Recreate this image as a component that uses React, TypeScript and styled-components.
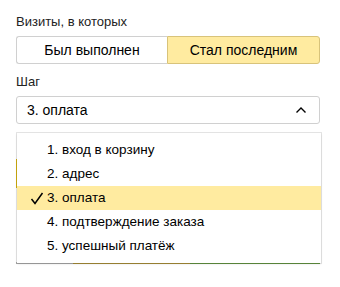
import React, { useState } from "react";
import styled, { createGlobalStyle } from "styled-components";

const GlobalStyle = createGlobalStyle`
  body {
    margin: 0;
    background: #fff;
    font-family: "Liberation Sans", Arial, sans-serif;
    color: #000;
  }
`;

const Wrapper = styled.div`
  width: 340px;
  height: 287px;
  padding: 13px 20px 0 16px;
  box-sizing: border-box;
  display: flex;
  flex-direction: column;
`;

const Label = styled.p`
  margin: 0 0 6px;
  font-size: 13px;
  line-height: 17px;
  color: #222;
`;

const Segmented = styled.div`
  display: grid;
  grid-template-columns: 151px 1fr;
  height: 28px;
  margin-bottom: 9px;
`;

const Segment = styled.button<{ $active: boolean }>`
  font: inherit;
  font-size: 14px;
  color: #000;
  cursor: pointer;
  background: ${(p) => (p.$active ? "#ffeba0" : "#fff")};
  border: 1px solid ${(p) => (p.$active ? "#d8c37a" : "#d0d0d0")};
  border-radius: ${(p) => (p.$active ? "0 3px 3px 0" : "3px 0 0 3px")};
  ${(p) => (p.$active ? "" : "border-right: none;")}
  padding: 0;
`;

const SelectArea = styled.div`
  position: relative;
`;

const SelectBox = styled.div`
  display: flex;
  align-items: center;
  justify-content: space-between;
  height: 28px;
  padding: 0 12px 0 10px;
  border: 1px solid #d0d0d0;
  border-radius: 3px;
  box-sizing: border-box;
  font-size: 14px;
`;

const Behind = styled.div`
  margin-top: 11px;
  height: 129px;
  display: flex;
  flex-direction: column;
  justify-content: flex-end;
  position: relative;
`;

const Accent = styled.div`
  position: absolute;
  left: 0;
  top: 24px;
  width: 2px;
  height: 29px;
  background: #e2bd10;
`;

const Stripe = styled.div`
  display: grid;
  grid-template-columns: 57px 117px 1fr;
  height: 2px;
`;

const StripePart = styled.div<{ $color: string }>`
  background: ${(p) => p.$color};
`;

const Menu = styled.ul`
  position: absolute;
  top: 37px;
  left: 1px;
  right: -1px;
  margin: 0;
  padding: 5px 0 5px;
  list-style: none;
  background: #fff;
  box-shadow: 0 0 0 1px rgba(0, 0, 0, 0.1), 0 1px 2px rgba(0, 0, 0, 0.12);
`;

const Item = styled.li<{ $selected: boolean }>`
  position: relative;
  height: 24px;
  line-height: 24px;
  padding-left: 30px;
  font-size: 13.5px;
  background: ${(p) => (p.$selected ? "#ffeba0" : "transparent")};
`;

const Check = styled.svg`
  position: absolute;
  left: 13px;
  top: 6px;
`;

const steps = [
  "1. вход в корзину",
  "2. адрес",
  "3. оплата",
  "4. подтверждение заказа",
  "5. успешный платёж",
];

function App() {
  const [mode, setMode] = useState(1);
  const [step, setStep] = useState(2);

  return (
    <Wrapper>
      <GlobalStyle />
      <Label>Визиты, в которых</Label>
      <Segmented>
        <Segment $active={mode === 0} onClick={() => setMode(0)}>
          Был выполнен
        </Segment>
        <Segment $active={mode === 1} onClick={() => setMode(1)}>
          Стал последним
        </Segment>
      </Segmented>
      <Label>Шаг</Label>
      <SelectArea>
        <SelectBox>
          <span>{steps[step]}</span>
          <svg width="12" height="8" viewBox="0 0 12 8">
            <path d="M1.5 6.5 L6 2 L10.5 6.5" fill="none" stroke="#000" strokeWidth="1.4" />
          </svg>
        </SelectBox>
        <Behind>
          <Accent />
          <Stripe>
            <StripePart $color="#b8b8b8" />
            <StripePart $color="#b89a3c" />
            <StripePart $color="#6aa046" />
          </Stripe>
        </Behind>
        <Menu>
          {steps.map((s, i) => (
            <Item key={s} $selected={i === step} onClick={() => setStep(i)}>
              {i === step && (
                <Check width="14" height="13" viewBox="0 0 14 13">
                  <path d="M1.5 7 L5 11.5 L12.5 1" fill="none" stroke="#000" strokeWidth="1.5" />
                </Check>
              )}
              {s}
            </Item>
          ))}
        </Menu>
      </SelectArea>
    </Wrapper>
  );
}

export default App;
